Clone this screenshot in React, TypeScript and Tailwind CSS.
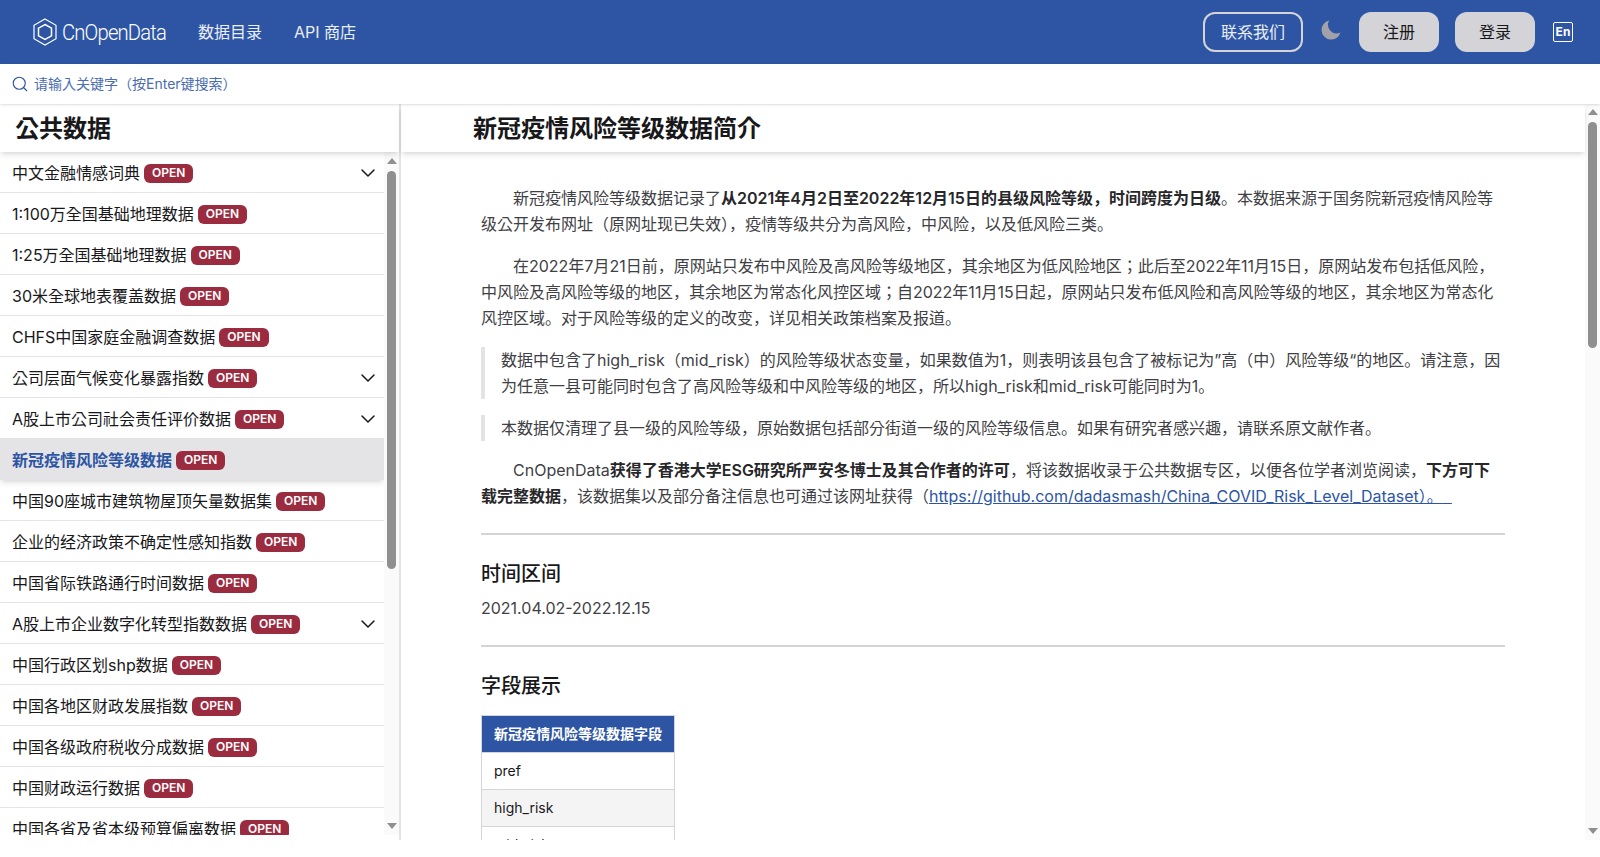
import { ChevronDown, Search } from "lucide-react";

const FONT = "font-['Inter','Noto_Sans_CJK_KR',sans-serif]";

const items: { name: string; more?: boolean; active?: boolean }[] = [
  { name: "中文金融情感词典", more: true },
  { name: "1:100万全国基础地理数据" },
  { name: "1:25万全国基础地理数据" },
  { name: "30米全球地表覆盖数据" },
  { name: "CHFS中国家庭金融调查数据" },
  { name: "公司层面气候变化暴露指数", more: true },
  { name: "A股上市公司社会责任评价数据", more: true },
  { name: "新冠疫情风险等级数据", active: true },
  { name: "中国90座城市建筑物屋顶矢量数据集" },
  { name: "企业的经济政策不确定性感知指数" },
  { name: "中国省际铁路通行时间数据" },
  { name: "A股上市企业数字化转型指数数据", more: true },
  { name: "中国行政区划shp数据" },
  { name: "中国各地区财政发展指数" },
  { name: "中国各级政府税收分成数据" },
  { name: "中国财政运行数据" },
  { name: "中国各省及省本级预算偏离数据" },
];

function Logo() {
  return (
    <svg width="24" height="28" viewBox="0 0 24 28" fill="none" stroke="#fff" strokeWidth="1.2">
      <path d="M12 1 L23 7.3 V20.7 L12 27 L1 20.7 V7.3 Z" />
      <path d="M12 6.5 L18.5 10.2 V17.8 L12 21.5 L5.5 17.8 V10.2 Z" strokeWidth="1.5" />
    </svg>
  );
}

function Moon() {
  return (
    <svg width="20" height="20" viewBox="0 0 20 20" fill="#a1a1aa">
      <path d="M8.2 0.6 A9.6 9.6 0 1 0 19.4 12.6 A8.6 8.6 0 0 1 8.2 0.6 Z" />
    </svg>
  );
}

function Arrow({ down }: { down?: boolean }) {
  return (
    <svg width="10" height="6" viewBox="0 0 10 6" fill="#8f8f8f">
      <path d={down ? "M0 0H10L5 6Z" : "M0 6H10L5 0Z"} />
    </svg>
  );
}

function Scrollbar({ thumb, top, bottomGap }: { thumb: string; top: string; bottomGap: string }) {
  return (
    <div className="w-[15px] shrink-0 h-full bg-[#fafafa] flex flex-col items-center">
      <div className={top}>
        <Arrow />
      </div>
      <div className={`w-[9px] rounded-full bg-[#8f8f8f] ${thumb}`} />
      <div className="flex-1" />
      <div className={bottomGap}>
        <Arrow down />
      </div>
    </div>
  );
}

function Row({ name, more, active }: { name: string; more?: boolean; active?: boolean }) {
  return (
    <div
      className={
        "h-[41px] shrink-0 pl-3 pr-1 flex items-center justify-between " +
        (active
          ? "bg-[#e4e4e7] shadow-md relative pt-px"
          : "border-b border-[#e4e4e7] pt-[2px]")
      }
    >
      <div className="flex items-center gap-1">
        <span className={active ? "text-[16px] font-semibold text-[#2d55a4]" : "text-[16px] text-[#18181b]"}>{name}</span>
        <span className="h-[19px] px-2 rounded-md bg-[#9b2c40] text-white text-[12px] font-semibold flex items-center">OPEN</span>
      </div>
      {more && <ChevronDown size={24} strokeWidth={1.5} className="text-[#18181b]" />}
    </div>
  );
}

export default function App() {
  return (
    <div className={`h-screen overflow-hidden bg-white ${FONT} text-[#3f3f46]`}>
      <header className="h-16 bg-[#2d55a4] flex items-center pl-[33px] pr-[27px]">
        <Logo />
        <span className="ml-[5px] w-[106px] origin-left scale-x-[0.92] text-[22px] font-light text-white font-['Roboto',sans-serif] tracking-[-0.9px] whitespace-nowrap">CnOpenData</span>
        <a className="ml-[30px] text-[16px] text-white/90">数据目录</a>
        <a className="ml-8 text-[16px] text-white/90">API 商店</a>
        <div className="flex-1" />
        <button className="w-[100px] h-10 rounded-xl border-2 border-[#d4d4d8] text-[16px] text-white/90">联系我们</button>
        <div className="ml-[18px] mb-[4px]">
          <Moon />
        </div>
        <button className="ml-[18px] w-20 h-10 rounded-xl bg-[#d4d4d8] text-[16px] text-[#18181b]">注册</button>
        <button className="ml-4 w-20 h-10 rounded-xl bg-[#d4d4d8] text-[16px] text-[#18181b]">登录</button>
        <div className="ml-[18px] w-5 h-5 rounded-[2px] border-[1.5px] border-white flex items-center justify-center text-white text-[12px] font-bold">En</div>
      </header>

      <div className="h-10 flex items-center pl-[11px] gap-[5px] shadow-sm relative z-20">
        <Search size={18} strokeWidth={1.5} className="text-[#2d55a4]" />
        <input
          className="flex-1 -mt-px outline-none text-[14px] placeholder:text-[#4a6db0]"
          placeholder="请输入关键字（按Enter键搜索）"
        />
      </div>

      <main className="h-[736px] flex">
        <aside className="w-[401px] shrink-0 border-r-2 border-[#e4e4e7] flex flex-col">
          <div className="h-12 shrink-0 pl-[15px] pt-[2px] flex items-center text-[24px] font-bold text-[#18181b] shadow-md relative z-10">公共数据</div>
          <div className="h-[683px] flex">
            <div className="flex-1 flex flex-col overflow-hidden">
              {items.map((it) => (
                <Row key={it.name} {...it} />
              ))}
            </div>
            <Scrollbar thumb="h-[398px]" top="h-[19px] pt-[6px]" bottomGap="h-[12px]" />
          </div>
        </aside>

        <section className="flex-1 min-w-0 flex flex-col">
          <h1 className="h-12 shrink-0 pl-[72px] pt-[2px] flex items-center text-[24px] font-bold text-[#18181b] shadow-md relative z-10">新冠疫情风险等级数据简介</h1>
          <div className="flex-1 overflow-hidden px-20 pt-[33px] text-[16px] leading-[26px]">
            <div className="w-[1024px] flex flex-col gap-4">
              <p className="indent-8">
                新冠疫情风险等级数据记录了<strong className="font-semibold text-[#27272a]">从2021年4月2日至2022年12月15日的县级风险等级，时间跨度为日级</strong>。本数据来源于国务院新冠疫情风险等级公开发布网址（原网址现已失效），疫情等级共分为高风险，中风险，以及低风险三类。
              </p>
              <p className="indent-8">
                在2022年7月21日前，原网站只发布中风险及高风险等级地区，其余地区为低风险地区；此后至2022年11月15日，原网站发布包括低风险，中风险及高风险等级的地区，其余地区为常态化风控区域；自2022年11月15日起，原网站只发布低风险和高风险等级的地区，其余地区为常态化风控区域。对于风险等级的定义的改变，详见相关政策档案及报道。
              </p>
              <blockquote className="border-l-4 border-[#e4e4e7] pl-4">
                数据中包含了high_risk（mid_risk）的风险等级状态变量，如果数值为1，则表明该县包含了被标记为”高（中）风险等级“的地区。请注意，因为任意一县可能同时包含了高风险等级和中风险等级的地区，所以high_risk和mid_risk可能同时为1。
              </blockquote>
              <blockquote className="border-l-4 border-[#e4e4e7] pl-4">
                本数据仅清理了县一级的风险等级，原始数据包括部分街道一级的风险等级信息。如果有研究者感兴趣，请联系原文献作者。
              </blockquote>
              <p className="indent-8">
                CnOpenData<strong className="font-semibold text-[#27272a]">获得了香港大学ESG研究所严安冬博士及其合作者的许可</strong>，将该数据收录于公共数据专区，以便各位学者浏览阅读，<strong className="font-semibold text-[#27272a]">下方可下载完整数据</strong>，该数据集以及部分备注信息也可通过该网址获得（<a className="text-[#2d55a4] underline">https://github.com/dadasmash/China_COVID_Risk_Level_Dataset）。{"\u00a0\u00a0"}</a>
              </p>
            </div>
            <hr className="w-[1024px] mt-6 border-t-2 border-[#d4d4d8]" />
            <h2 className="mt-[25px] text-[20px] leading-[28px] font-medium text-[#18181b]">时间区间</h2>
            <p className="mt-[7px]">2021.04.02-2022.12.15</p>
            <hr className="w-[1024px] mt-6 border-t-2 border-[#d4d4d8]" />
            <h2 className="mt-[25px] text-[20px] leading-[28px] font-medium text-[#18181b]">字段展示</h2>
            <table className="mt-[15px] border border-[#d4d4d8] text-[14px] leading-5 border-collapse">
              <thead>
                <tr>
                  <th className="h-[37px] px-3 bg-[#2d55a4] text-white font-bold text-left">新冠疫情风险等级数据字段</th>
                </tr>
              </thead>
              <tbody className="text-[#18181b]">
                <tr className="border-t border-[#d4d4d8]"><td className="h-[37px] px-3">pref</td></tr>
                <tr className="border-t border-[#d4d4d8] bg-[#f4f4f5]"><td className="h-[37px] px-3">high_risk</td></tr>
                <tr className="border-t border-[#d4d4d8]"><td className="h-[37px] px-3">mid_risk</td></tr>
              </tbody>
            </table>
          </div>
        </section>

        <Scrollbar thumb="h-[226px]" top="h-[18px] pt-[5px]" bottomGap="h-[12px]" />
      </main>
    </div>
  );
}
